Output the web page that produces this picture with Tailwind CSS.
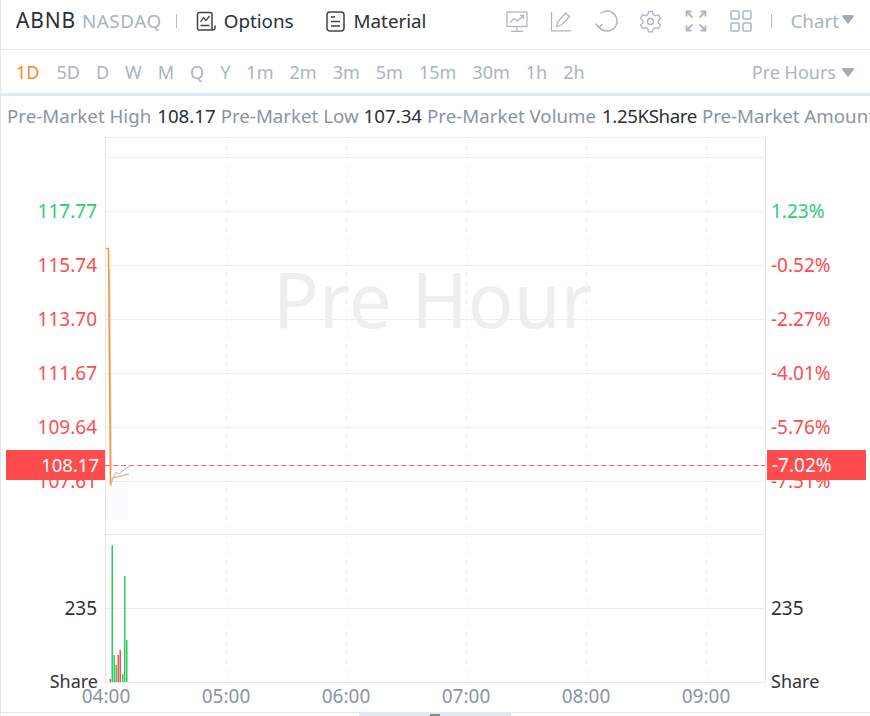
<!DOCTYPE html>
<html lang="en">
<head>
  <meta charset="UTF-8" />
  <title>ABNB Chart</title>
  <script src="https://cdn.jsdelivr.net/npm/@tailwindcss/browser@4"></script>
</head>
<body class="bg-white">
<div class="w-[870px] h-[716px] overflow-hidden border-l border-l-[#dfe7f1] font-['Noto_Sans','Liberation_Sans',sans-serif] flex flex-col">

  <!-- Header -->
  <header class="h-[50px] shrink-0 border-b border-[#e8ebef] flex items-center pl-[15px] pr-[16px] pb-[7px] text-[18.800px]">
    <span class="text-[21px] tracking-[0.8px] text-[#2b2f36]">ABNB</span>
    <span class="ml-[6px] text-[#a9b3c6] tracking-[0.6px]">NASDAQ</span>
    <span class="ml-[14px] h-[14px] w-px bg-[#b4bcc8]"></span>
    <svg class="ml-[19px]" width="21" height="21" viewBox="0 0 21 21" fill="none" stroke="#444" stroke-width="1.500"><path d="M17 19H3.500a2 2 0 0 1-2-2V3.500a2 2 0 0 1 2-2h10.500a2 2 0 0 1 2 2V17a1.500 1.500 0 0 0 3 .5V14.500"/><path d="M4.500 11l3-4.500 2.500 3 3.500-4.500M4.500 14.500h9" stroke-width="1.300"/></svg>
    <span class="ml-[7px] text-[#2b2f36]">Options</span>
    <svg class="ml-[32px]" width="19" height="21" viewBox="0 0 19 21" fill="none" stroke="#444" stroke-width="1.500"><rect x="1" y="1" width="17" height="19" rx="3"/><path d="M5 6h4M5 10.500h9M5 15h9" stroke-width="1.300"/></svg>
    <span class="ml-[9px] text-[#2b2f36]">Material</span>
    <div class="ml-auto flex items-center">
      <svg width="22" height="21" viewBox="0 0 22 21" fill="none" stroke="#aeb6c4" stroke-width="1.300"><rect x="1" y="1" width="20" height="14.500"/><path d="M4 11.500l4-4 3.500 2.500 5.500-5M14 4.500h3.500V8M11 15.500v5M5 20.500h12"/></svg>
      <svg class="ml-[22px]" width="22" height="21" viewBox="0 0 22 21" fill="none" stroke="#aeb6c4" stroke-width="1.300"><path d="M1.500 1v18.800h19.500"/><path d="M6.500 15.500l1.500-5L15.500 2l4 3.500-8 8.500z"/></svg>
      <svg class="ml-[22px]" width="24" height="22" viewBox="0 0 24 22" fill="none" stroke="#aeb6c4" stroke-width="1.500"><path d="M6.500 3.500A10 10 0 1 1 5 17"/><path d="M1.500 13.500l3.500 4 3.500-3.500"/></svg>
      <svg class="ml-[21px]" width="23" height="23" viewBox="0 0 23 23" fill="none" stroke="#aeb6c4" stroke-width="1.300"><path d="M9.500 1.500h4l.6 3 2.500 1.400 2.900-1 2 3.500-2.300 2v2.600l2.300 2-2 3.500-2.900-1-2.500 1.400-.6 3h-4l-.6-3-2.500-1.400-2.900 1-2-3.500 2.300-2V10.400l-2.300-2 2-3.500 2.900 1 2.500-1.400z"/><circle cx="11.500" cy="11.500" r="3"/></svg>
      <svg class="ml-[23px]" width="22" height="22" viewBox="0 0 22 22" fill="none" stroke="#aeb6c4" stroke-width="1.800"><path d="M1.500 6.500V1.500H6.500M1.500 1.500l6 6M20.500 6.500V1.500H15.500M20.500 1.500l-6 6M1.500 15.500v5H6.500M1.500 20.500l6-6M20.500 15.500v5H15.500M20.500 20.500l-6-6"/></svg>
      <svg class="ml-[23px]" width="22" height="22" viewBox="0 0 22 22" fill="none" stroke="#aeb6c4" stroke-width="1.500"><rect x="1" y="1" width="8" height="8" rx="1"/><rect x="13" y="1" width="8" height="8" rx="1"/><rect x="1" y="13" width="8" height="8" rx="1"/><rect x="13" y="13" width="8" height="8" rx="1"/></svg>
      <span class="ml-[19px] h-[14px] w-px bg-[#b4bcc8]"></span>
      <span class="ml-[18px] text-[#a9b3c6]">Chart</span>
      <svg class="ml-[3px] mb-[4px]" width="12" height="9" viewBox="0 0 12 9" fill="#a4abb9"><path d="M1 0h10a1 1 0 0 1 .8 1.600L6.800 8.300a1 1 0 0 1-1.600 0L.2 1.600A1 1 0 0 1 1 0z"/></svg>
    </div>
  </header>

  <!-- Period tabs -->
  <nav class="h-[46px] shrink-0 border-b-[3px] border-[#e3e9f1] flex items-center pl-[15px] pr-[16px] pt-[1px] text-[18px] text-[#a9b3c6]">
    <span class="text-[#ff8a24]">1D</span>
    <span class="ml-[17px]">5D</span>
    <span class="ml-[16px]">D</span>
    <span class="ml-[16px]">W</span>
    <span class="ml-[16px]">M</span>
    <span class="ml-[16px]">Q</span>
    <span class="ml-[16px]">Y</span>
    <span class="ml-[16px]">1m</span>
    <span class="ml-[16px]">2m</span>
    <span class="ml-[16px]">3m</span>
    <span class="ml-[16px]">5m</span>
    <span class="ml-[16px]">15m</span>
    <span class="ml-[16px]">30m</span>
    <span class="ml-[16px]">1h</span>
    <span class="ml-[16px]">2h</span>
    <span class="ml-auto">Pre Hours</span>
    <svg class="ml-[6px]" width="12" height="9" viewBox="0 0 12 9" fill="#a4abb9"><path d="M1 0h10a1 1 0 0 1 .8 1.600L6.800 8.300a1 1 0 0 1-1.600 0L.2 1.600A1 1 0 0 1 1 0z"/></svg>
  </nav>

  <!-- Pre-market stats -->
  <div class="h-[41px] shrink-0 flex items-center pl-[6px] pb-[1px] whitespace-nowrap overflow-hidden text-[18.700px] text-[#8a94a6]">
    <span>Pre-Market High</span>
    <span class="ml-[6px] text-[#2b2f36]">108.17</span>
    <span class="ml-[5px]">Pre-Market Low</span>
    <span class="ml-[5px] text-[#2b2f36]">107.34</span>
    <span class="ml-[5px]">Pre-Market Volume</span>
    <span class="ml-[6px] text-[#2b2f36] tracking-[-0.4px]">1.25KShare</span>
    <span class="ml-[5px]">Pre-Market Amount</span>
  </div>

  <!-- Chart -->
  <section class="relative flex-1 flex text-[19px]">
    <!-- plot drawn on a free canvas -->
    <svg class="absolute left-[-1px] top-0" width="870" height="579" viewBox="0 137 870 579" fill="none">
      <g stroke="#eeeeee" stroke-width="1">
        <path d="M105 157.500H765M105 211.500H765M105 265.500H765M105 319.500H765M105 373.500H765M105 427.500H765M105 481.500H765"/>
        <path d="M105 608.500H765" stroke="#e8ecf1"/>
      </g>
      <g stroke="#f0f0f0" stroke-width="1" stroke-dasharray="5 4">
        <path d="M226.500 137V682M346.500 137V682M466.500 137V682M586.500 137V682M706.500 137V682"/>
      </g>
      <path d="M105.500 137V682M765.500 137V682" stroke="#e4e6ea"/>
      <path d="M105 137.500H765" stroke="#eeeeee"/>
      <path d="M105 534.500H765M105 682.500H765" stroke="#e4e8ee"/>
      <path d="M0 712.500H870" stroke="#e3e9f1"/>
      <rect x="359" y="713" width="152" height="3" fill="#e3e9f1"/>
      <rect x="430" y="714" width="10" height="2" fill="#888"/>
      <rect x="107" y="482" width="21" height="38" fill="#fbfcfe"/>
      <!-- price and average lines -->
      <path d="M110 486L113 478L116 472L119 474L124 470L129 466" stroke="#a8b2ee"/>
      <path d="M109.500 270L111 470" stroke="#ecc9ad" stroke-width="1.500"/>
      <path d="M106 248.500H108.500L110.500 486" stroke="#ff9330" stroke-width="1.500"/>
      <path d="M110.500 486L112.500 478L118 476.500L122 476L129 473.500" stroke="#fbb676" stroke-width="1.500"/>
      <path d="M105 465.500H765" stroke="#f2696b" stroke-dasharray="5 3"/>
      <!-- volume bars -->
      <g fill="#2ecc5f">
        <rect x="111.500" y="545" width="1.500" height="137"/>
        <rect x="113.500" y="655" width="1.500" height="27"/>
        <rect x="115.500" y="665" width="1.500" height="17"/>
        <rect x="122" y="674" width="1.500" height="8"/>
        <rect x="124" y="576" width="1.500" height="106"/>
        <rect x="126" y="640" width="1.500" height="42"/>
      </g>
      <g fill="#ff4d4d">
        <rect x="109.500" y="679" width="1.500" height="3"/>
        <rect x="117.500" y="655" width="1.500" height="27"/>
        <rect x="119.500" y="650" width="1.500" height="32"/>
      </g>
    </svg>

    <!-- watermark -->
    <div class="absolute left-[272px] top-[122px] text-[76px] leading-[80px] text-[#eeeeee]">Pre Hour</div>

    <!-- left axis -->
    <div class="relative w-[96px] shrink-0 text-right flex flex-col">
      <div class="h-[47px]"></div>
      <div class="h-[54px] leading-[54px] text-[#2ecc71]">117.77</div>
      <div class="h-[54px] leading-[54px] text-[#ff4d4d]">115.74</div>
      <div class="h-[54px] leading-[54px] text-[#ff4d4d]">113.70</div>
      <div class="h-[54px] leading-[54px] text-[#ff4d4d]">111.67</div>
      <div class="h-[54px] leading-[54px] text-[#ff4d4d]">109.64</div>
      <div class="h-[54px] leading-[54px] text-[#ff4d4d]">107.61</div>
      <div class="h-[73px]"></div>
      <div class="h-[54px] leading-[54px] text-[#333333]">235</div>
      <div class="h-[19px]"></div>
      <div class="h-[54px] leading-[54px] text-[#333333] text-[18px] -mr-[1px]">Share</div>
    </div>

    <!-- time axis -->
    <div class="absolute left-[49px] top-[545px] w-[720px] flex text-[#8a94a6]">
      <span class="w-[120px] text-center -ml-[4px]">04:00</span>
      <span class="w-[120px] text-center">05:00</span>
      <span class="w-[120px] text-center">06:00</span>
      <span class="w-[120px] text-center">07:00</span>
      <span class="w-[120px] text-center">08:00</span>
      <span class="w-[120px] text-center">09:00</span>
    </div>

    <!-- right axis -->
    <div class="absolute left-[770px] top-0 flex flex-col">
      <div class="h-[47px]"></div>
      <div class="h-[54px] leading-[54px] text-[#2ecc71]">1.23%</div>
      <div class="h-[54px] leading-[54px] text-[#ff4d4d]">-0.52%</div>
      <div class="h-[54px] leading-[54px] text-[#ff4d4d]">-2.27%</div>
      <div class="h-[54px] leading-[54px] text-[#ff4d4d]">-4.01%</div>
      <div class="h-[54px] leading-[54px] text-[#ff4d4d]">-5.76%</div>
      <div class="h-[54px] leading-[54px] text-[#ff4d4d]">-7.51%</div>
      <div class="h-[73px]"></div>
      <div class="h-[54px] leading-[54px] text-[#333333]">235</div>
      <div class="h-[19px]"></div>
      <div class="h-[54px] leading-[54px] text-[#333333] text-[18px]">Share</div>
    </div>

    <!-- last price tags -->
    <div class="absolute left-[5px] top-[313px] w-[99px] h-[30px] bg-[#ff4d4d] text-white text-right pr-[6px] text-[18.500px] leading-[30px]">108.17</div>
    <div class="absolute left-[766px] top-[313px] w-[99px] h-[30px] bg-[#ff4d4d] text-white pl-[5px] leading-[30px]">-7.02%</div>
  </section>
</div>
</body>
</html>
